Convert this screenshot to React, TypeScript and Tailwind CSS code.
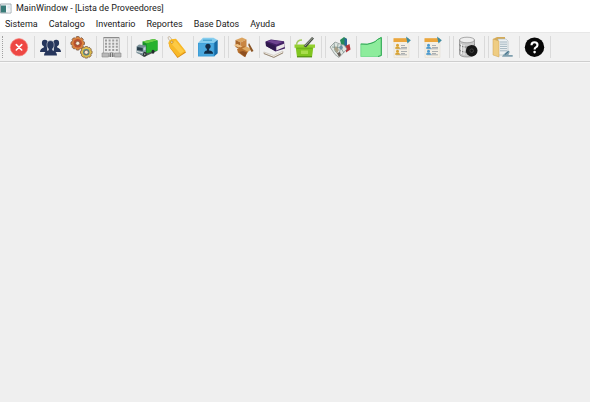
import type { ReactNode } from "react";

type Tool = { label: string; icon: ReactNode };

const gearTeeth = [0, 45, 90, 135];

function Gear({ x, y, r, color, core }: { x: number; y: number; r: number; color: string; core: string }) {
  return (
    <g transform={`translate(${x} ${y})`}>
      {gearTeeth.map((a) => (
        <rect key={a} x={-1.7} y={-r} width={3.4} height={r * 2} rx={1} fill={color} stroke="#6b4a38" strokeWidth={0.7} transform={`rotate(${a})`} />
      ))}
      <circle r={r - 1} fill={color} />
      <circle r={r - 2.6} fill={core} />
      <circle r={2} fill="#f6ead8" stroke="#7a4a30" strokeWidth={0.6} />
    </g>
  );
}

function ListSheet({ accent }: { accent: string }) {
  return (
    <>
      <path d="M3 4h15v18.5H3z" fill="#f4efe4" stroke="#e2ded3" strokeWidth="0.6" />
      <path d="M2.5 3.2h15v3.8h-15z" fill="#eba63c" />
      <path d="M15 1.5l4.8 3.7-3.3 3.3z" fill="#3e8ba0" />
      <path d="M10 10.5h4M10 12.5h6M10 16.5h6M10 18.5h4M5 13.8h11M5 19.8h11" stroke="#a3a7aa" strokeWidth="0.9" />
      <g fill={accent}>
        <circle cx="6.5" cy="10.2" r="1.5" />
        <path d="M4 13.8q0-2.4 2.5-2.4t2.5 2.4z" />
        <circle cx="6.5" cy="16.2" r="1.5" />
        <path d="M4 19.8q0-2.4 2.5-2.4t2.5 2.4z" />
      </g>
    </>
  );
}

const groups: Tool[][] = [
  [
    {
      label: "Salir",
      icon: (
        <>
          <circle cx="12" cy="12.3" r="8.7" fill="#ee4743" stroke="#f58a83" strokeWidth="0.7" />
          <path d="M9.3 9.6l5.4 5.4M14.7 9.6l-5.4 5.4" stroke="#fff" strokeWidth="1.6" strokeLinecap="round" />
        </>
      ),
    },
    {
      label: "Usuarios",
      icon: (
        <g fill="#26365c">
          <ellipse cx="6.8" cy="8" rx="2.9" ry="3.3" />
          <path d="M2 17q0-3 3.8-4.4V10h3.4v7z" />
          <ellipse cx="18.2" cy="8" rx="2.9" ry="3.3" />
          <path d="M23 17q0-3-3.8-4.4V10h-3.4v7z" />
          <path d="M6 20.5q0-4 4.7-5.2V13h3.6v2.3q4.7 1.2 4.7 5.2z" />
          <ellipse cx="12.5" cy="10" rx="3.6" ry="4.4" stroke="#f0f0f0" strokeWidth="0.5" />
          <path d="M10.9 13h3.2v3h-3.2z" />
        </g>
      ),
    },
    {
      label: "Configuración",
      icon: (
        <>
          <Gear x={8.7} y={8.3} r={6.8} color="#d98340" core="#b9502e" />
          <Gear x={17.3} y={17.3} r={5.8} color="#dcbc4e" core="#4f8a90" />
        </>
      ),
    },
    {
      label: "Empresa",
      icon: (
        <>
          <path d="M3.5 3h15.8v18H3.5z" fill="#ececec" stroke="#a7a7a7" strokeWidth="0.8" />
          <path d="M3.5 2.5h15.8" stroke="#8b8b8b" />
          <g stroke="#9c9c9c" strokeWidth="2" strokeDasharray="2 1.6">
            <path d="M5 5.6h13.5M5 8.7h13.5M5 11.8h13.5M5 14.9h13.5" />
          </g>
          <path d="M2 18h6.5v4H2zM14.5 18H21v4h-6.5z" fill="#b9b9b9" stroke="#888" strokeWidth="0.6" />
          <path d="M9.5 17.5h4V22h-4z" fill="#777" />
          <path d="M11.5 18v4" stroke="#eee" strokeWidth="0.7" />
        </>
      ),
    },
  ],
  [
    {
      label: "Proveedores",
      icon: (
        <>
          <path d="M3 18l6 4 13-6v-3L6 15z" fill="#4d5754" />
          <path d="M7.5 6.5L19 4l3.5 1.5v10L12 18 7.5 15z" fill="#19902b" />
          <path d="M7.5 6.5L19 4l3.5 1.5-10.7 3z" fill="#69cf47" />
          <path d="M11.8 8.5l10.7-3v10L11.8 18z" fill="#27b22e" />
          <path d="M1.5 11.5L4 9.5l7 1v9l-2 1-7.5-2.5z" fill="#788f98" />
          <path d="M2.2 12l5.5 1v3L2 15z" fill="#263b47" />
          <path d="M8.5 12.8l2-.7v3l-2 .6z" fill="#bdd2da" />
          <path d="M1.8 16l6 1.3v1L2 17z" fill="#e3e7e7" />
          <ellipse cx="9.8" cy="19.3" rx="1.7" ry="2.3" fill="#222b2b" />
          <ellipse cx="9.8" cy="19.3" rx="0.7" ry="1.1" fill="#aaa" />
          <ellipse cx="18" cy="16.8" rx="1.5" ry="2" fill="#222b2b" />
        </>
      ),
    },
    {
      label: "Precios",
      icon: (
        <>
          <path d="M5 7Q1 3 2.5 1.8T6.5 6" fill="none" stroke="#b9a78a" strokeWidth="0.8" />
          <path d="M2.5 8L4 13l7.5 10L20 17.5 10.5 5z" fill="#d98a14" />
          <path d="M2.5 7L5 4.3l5-.5 9.8 12.4-8 5.8L3.5 12z" fill="#f8b928" />
          <path d="M6 9.5L9 5.2l9 11-3.5 2.5z" fill="#fdca45" />
          <circle cx="5.8" cy="7.2" r="1.1" fill="#fff4d0" stroke="#a97613" strokeWidth="0.6" />
        </>
      ),
    },
    {
      label: "Clientes",
      icon: (
        <>
          <path d="M1 8l5-5.2h10.5L20.5 5l-3 3z" fill="#86cdee" />
          <path d="M17 8l3.7-3.3v13.5L17 21.5z" fill="#176da8" />
          <path d="M1 8h16.3v13.5H1z" fill="#3e9ed8" />
          <path d="M2 8.6h14.3v12H2z" fill="#4aa8de" />
          <path d="M6 5.2h9" stroke="#399aca" />
          <circle cx="11" cy="11.3" r="2.6" fill="#122c46" />
          <path d="M9.9 13h2.2v2.5q4 .3 4 3.2H7q0-2.9 2.9-3.2z" fill="#122c46" />
        </>
      ),
    },
  ],
  [
    {
      label: "Productos",
      icon: (
        <>
          <path d="M3.5 5L10 2.5l4.5 2-6 3z" fill="#dca45f" />
          <path d="M3.5 5l5 2.5v7L3.5 12z" fill="#a76529" />
          <path d="M8.5 7.5l6-3v7l-6 3z" fill="#c98542" />
          <path d="M1.5 10l5 2.5 4-1-5-2.5z" fill="#eec389" />
          <path d="M5 14l7-3 6 3-5.5 8L6 17.5z" fill="#b8722f" />
          <path d="M10 13.5l4.5-2 6 3-5 2z" fill="#dfab66" />
          <path d="M11 16l4 1.5-1.7 4.7L7 17z" fill="#8e4f20" />
          <path d="M17 8l4.5 8-2 1-3.3-7z" fill="#8b5526" />
        </>
      ),
    },
    {
      label: "Kardex",
      icon: (
        <>
          <path d="M.8 17l10 3.5L20 16v2l-9 4.5-10-4z" fill="#f5f1e8" stroke="#b5aaa0" strokeWidth="0.5" />
          <path d="M.8 18.5l10 3.9 9.2-4.6" fill="none" stroke="#8a7863" strokeWidth="0.8" />
          <path d="M2.5 6.5L8 4.5l13 1.8 1 7.2-9.5 3L3 11z" fill="#422064" />
          <path d="M4 6.3L8.5 5l12 1.8-7 2.8z" fill="#6f4490" />
          <path d="M13.3 11.8l8.2-3.3v3.5l-8.2 3.5z" fill="#e9e4e6" />
          <path d="M2.7 7l9.8 4v5L3 11z" fill="#2f184c" />
        </>
      ),
    },
    {
      label: "Compras",
      icon: (
        <>
          <path d="M1.5 11h18l-1.5 11H3z" fill="#80c51f" />
          <path d="M0.5 9.5h20.5v3.3H.5z" fill="#93cf2f" />
          <path d="M2.5 9.8Q3 5 8 5" fill="none" stroke="#a5c960" strokeWidth="1.5" />
          <path d="M9.5 11L18 2l2 1.6-8 9z" fill="#444b42" />
          <path d="M10.8 11l7.7-8" stroke="#d9ddcc" strokeWidth="0.7" />
          <path d="M7 15.5h7v3.5H7z" fill="#a8dd4b" />
          <path d="M2.5 13.2h16" stroke="#5fa613" strokeWidth="0.8" />
          <path d="M3 21.8h15" stroke="#508c12" strokeWidth="1.2" />
        </>
      ),
    },
  ],
  [
    {
      label: "Ventas",
      icon: (
        <>
          <path d="M11 5l4-3 3 2v7l-5 2z" fill="#278b59" />
          <path d="M15.5 3l2.5 1v6l-2.5 2z" fill="#2b679b" />
          <path d="M16.5 11l4-2 1 5.5-4.5 3z" fill="#b5343a" />
          <path d="M1 12l5-5 5 2 4 1 3 4-8 8.5-4-3z" fill="#dfe5e1" stroke="#7f8988" strokeWidth="0.7" />
          <path d="M5 8l1 8 5 5M3 12l9 1 3 5M9 9l-1 8M12 10l-2 10" fill="none" stroke="#7b908c" strokeWidth="0.8" />
          <path d="M5 14l2-3 3 4-2 3z" fill="#a9a189" />
          <path d="M10 12l3-2 1 3-2 2z" fill="#6c8fa5" />
          <path d="M8 18l3-1 1 3-2 2z" fill="#665c55" />
        </>
      ),
    },
    {
      label: "Estadísticas",
      icon: (
        <>
          <path d="M.8 9Q8 10 12 8q3.5-1 5.500-3.500L21.300 2.500v18L18 21.500H.8z" fill="#8dec9c" stroke="#6cd888" strokeWidth="0.8" />
          <path d="M.8 9Q8 10 12 8q3.500-1 5.500-3.500L21.300 2.500v18L18 21.500" fill="none" stroke="#2fa653" strokeWidth="1" />
        </>
      ),
    },
    { label: "Lista de clientes", icon: <ListSheet accent="#d9a332" /> },
    { label: "Lista de proveedores", icon: <ListSheet accent="#4d9bd0" /> },
  ],
  [
    {
      label: "Respaldo",
      icon: (
        <>
          <path d="M2.5 5v14c0 4 15 4 15 0V5z" fill="#c8c8c8" stroke="#888" strokeWidth="0.7" />
          <ellipse cx="10" cy="5" rx="7.5" ry="2.8" fill="#eee" stroke="#888" strokeWidth="0.7" />
          <path d="M2.5 9.5c0 3.5 15 3.5 15 0M2.5 14.5c0 3.5 15 3.5 15 0" fill="none" stroke="#777" />
          <path d="M4.5 9v10M7 10v10M13 10v3" stroke="#eee" />
          <circle cx="14.7" cy="15.7" r="5.8" fill="#171717" />
          <circle cx="14.7" cy="15.7" r="1.8" fill="none" stroke="#4a4a4a" strokeWidth="0.8" />
        </>
      ),
    },
  ],
  [
    {
      label: "Documentos",
      icon: (
        <>
          <path d="M1 4l4-2h8v18H1z" fill="#d5ab59" />
          <path d="M6 4h8l2 2v14H6z" fill="#edf1f3" stroke="#acb8bd" strokeWidth="0.6" />
          <path d="M8 7h7M8 9.2h7M8 11.4h7M8 13.6h7M8 15.8h7" stroke="#91a6b1" strokeWidth="0.8" />
          <path d="M1 4l6 2v16l-6-2z" fill="#efcd83" stroke="#cda353" strokeWidth="0.5" />
          <path d="M11 20l5-4.500 1.800 1.200-1.500 3.300h4.400v1.800H10z" fill="#7f9fae" />
          <path d="M13 19.500l3.500-3" stroke="#3d6d88" />
        </>
      ),
    },
    {
      label: "Ayuda",
      icon: (
        <>
          <circle cx="11.5" cy="12.2" r="9.7" fill="#080808" />
          <path d="M8.5 10.3Q8.5 7.3 11.5 7.3T14.5 10Q14.5 11.5 12.8 12.4Q11.6 13 11.6 14.4" fill="none" stroke="#fff" strokeWidth="2.1" />
          <circle cx="11.6" cy="17.1" r="1.3" fill="#fff" />
        </>
      ),
    },
  ],
];

const menus = ["Sistema", "Catalogo", "Inventario", "Reportes", "Base Datos", "Ayuda"];

export default function App() {
  return (
    <div className="flex min-h-screen flex-col bg-[#efefef] font-[Roboto,'Open_Sans',sans-serif] text-[9px] text-[#1a1a1a]">
      <header className="flex h-[18px] items-center gap-1 bg-white">
        <svg className="h-3 w-3 shrink-0" viewBox="0 0 12 12" aria-hidden="true">
          <path d="M.5 1h10.500v9H.5z" fill="#f5f7f8" stroke="#a2adb3" />
          <path d="M1 2.500h5v7H1z" fill="#397b78" />
          <path d="M7.500 2.500h3v3h-3z" fill="#dce6ed" />
          <path d="M7.500 6.500h3v3h-3z" fill="#eceff1" />
        </svg>
        <h1>MainWindow - [Lista de Proveedores]</h1>
      </header>
      <nav aria-label="Menú" className="flex h-[15px] items-center gap-[11px] border-b border-[#e7e7e7] bg-white pl-[5px]">
        {menus.map((menu) => (
          <button key={menu} type="button">{menu}</button>
        ))}
      </nav>
      <div role="toolbar" aria-label="Herramientas" className="flex h-[29px] items-center border-b border-[#cecece] bg-[#f1f1f1]">
        <div className="mr-px ml-0.5 h-[22px] border-l border-dotted border-[#a0a0a0]" />
        <div className="flex gap-[3px]">
          {groups.map((tools, i) => (
            <div key={tools[0].label} className={i === 0 ? "flex" : "flex border-l border-[#dadada]"}>
              {tools.map((tool) => (
                <button key={tool.label} type="button" aria-label={tool.label} className="flex h-[22px] w-[31px] items-center justify-center border-r border-[#dadada]">
                  <svg className="h-6 w-6 shrink-0" viewBox="0 0 24 24" aria-hidden="true">{tool.icon}</svg>
                </button>
              ))}
            </div>
          ))}
        </div>
      </div>
      <main className="flex-1 border-t border-[#f8f8f8]" />
    </div>
  );
}
